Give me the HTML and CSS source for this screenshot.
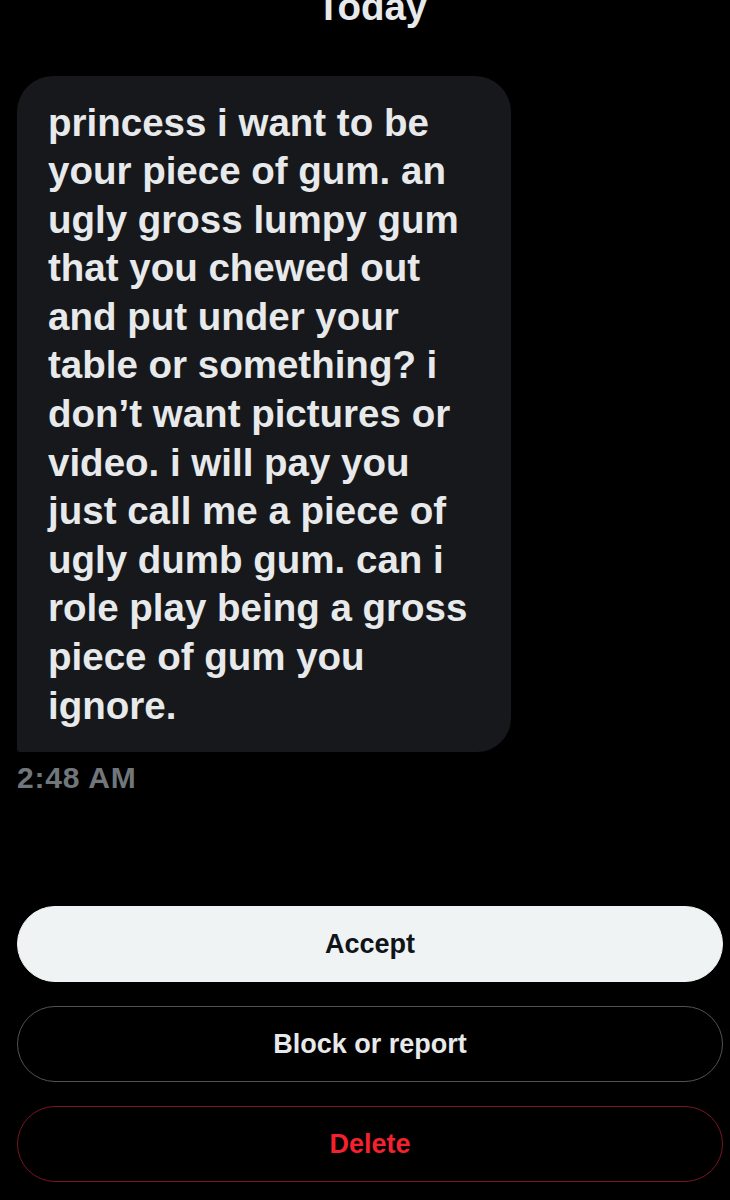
FILE: index.html
```html
<!DOCTYPE html>
<html lang="en">
<head>
    <meta charset="UTF-8">
    <meta name="viewport" content="width=device-width, initial-scale=1.0">
    <title>Message request</title>
    <link rel="stylesheet" href="styles.css">
</head>
<body>

    <!-- Day divider (scrolled partly off screen) -->
    <div class="day">Today</div>

    <!-- Incoming message -->
    <div class="message">
        <div class="bubble">princess i want to be your piece of gum. an ugly gross lumpy gum that you chewed out and put under your table or something? i don’t want pictures or video. i will pay you just call me a piece of ugly dumb gum. can i role play being a gross piece of gum you ignore.</div>
        <div class="time">2:48 AM</div>
    </div>

    <!-- Request actions -->
    <div class="actions">
        <button class="btn accept-btn">Accept</button>
        <button class="btn block-btn">Block or report</button>
        <button class="btn delete-btn">Delete</button>
    </div>

</body>
</html>
```

FILE: styles.css
```css
body {
    font-family: 'Liberation Sans', Arial, sans-serif;
    margin: 0;
    padding: 0;
    background: #000;
    color: #e7e9ea;
}

.day {
    margin-top: -17px;
    padding-left: 14px;
    font-size: 38.5px;
    line-height: 48.5px;
    font-weight: 700;
    text-align: center;
}

.message {
    margin: 44px 0 0 17px;
}

.bubble {
    width: 494px;
    box-sizing: border-box;
    padding: 23px 23px 22px 31px;
    background-color: #16181c;
    border-radius: 36px 36px 34px 3px;
    font-size: 38.5px;
    line-height: 48.6px;
    font-weight: 700;
    color: #e7e9ea;
}

.time {
    margin-top: 8px;
    font-size: 30px;
    line-height: 36px;
    font-weight: 700;
    letter-spacing: 0.8px;
    color: #71767b;
}

.actions {
    display: flex;
    flex-direction: column;
    gap: 24px;
    margin: 110px 7px 0 17px;
}

.btn {
    height: 76px;
    width: 100%;
    box-sizing: border-box;
    border-radius: 38px;
    font-family: 'Liberation Sans', Arial, sans-serif;
    font-size: 27px;
    font-weight: 700;
    background: transparent;
    cursor: pointer;
    display: flex;
    align-items: center;
    justify-content: center;
}

.accept-btn {
    background-color: #eff3f4;
    color: #0f1419;
    border: 1px solid #eff3f4;
}

.block-btn {
    color: #e7e9ea;
    border: 1.5px solid #505356;
}

.delete-btn {
    color: #f4212e;
    border: 1.5px solid #7a1520;
}
```
